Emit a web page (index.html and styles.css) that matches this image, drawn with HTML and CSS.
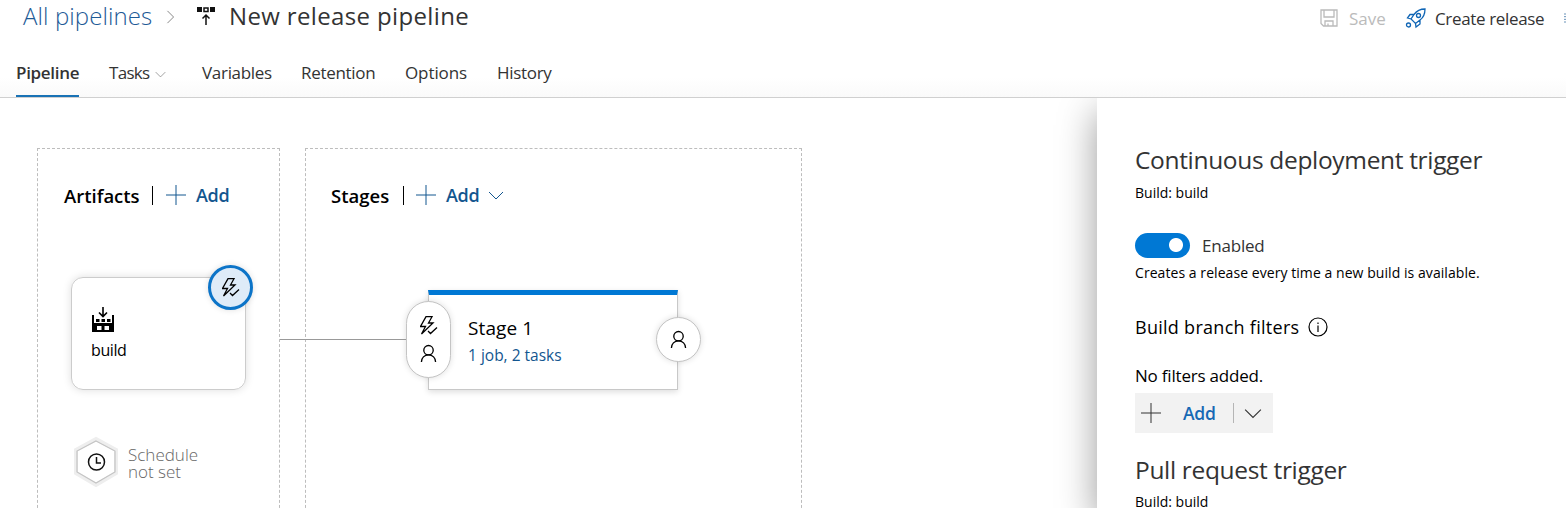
FILE: index.html
```html
<!DOCTYPE html>
<html lang="en">
<head>
<meta charset="utf-8">
<title>New release pipeline</title>
<link rel="stylesheet" href="styles.css">
</head>
<body>
<svg class="defs" width="0" height="0">
  <symbol id="bolt" viewBox="0 0 18 19"><path d="M6 .7h6L8.500 7H13L1.500 18l4-7.500h-5zM8 15l2.500 2.500 6.500-6"/></symbol>
  <symbol id="person" viewBox="0 0 18 20"><circle cx="9" cy="6.500" r="5"/><path d="M1.500 19c0-4.500 3.200-7.500 7.500-7.500s7.500 3 7.500 7.500"/></symbol>
  <symbol id="plus" viewBox="0 0 20 20"><path d="M10 0v20M0 10h20"/></symbol>
  <symbol id="chevron" viewBox="0 0 16 9"><path d="M1 1l7 7 7-7"/></symbol>
</svg>
<header class="header">
  <div class="title-row">
    <a class="crumb">All pipelines</a>
    <svg class="crumb-sep" viewBox="0 0 9 16"><path d="M1 1l7 7-7 7"/></svg>
    <svg class="release-icon" viewBox="0 0 18 19"><path class="fill" d="M0 0h5v5H0zM13 0h5v5h-5z"/><path d="M7 1h4v3.500H7zM9 18V8M5.500 11.500L9 8l3.500 3.500"/></svg>
    <h1 class="title">New release pipeline</h1>
    <div class="actions">
      <svg class="save-icon" viewBox="0 0 18 18"><path d="M1 1h16v16H3.500L1 14.500zM4 1v7h10V1M5 17v-5h8v5M8 17v-2.500"/></svg>
      <span class="save">Save</span>
      <svg class="rocket-icon" viewBox="0 0 21 20"><path d="M20 1c-5 0-8.500 2-11 5.500L6 11l4.500 4.500L15 12c3.500-2.500 5-6 5-11zM9 6.500L5 6.500 2.500 10 6 11M15 12v4l-4 3-.5-3.500"/><circle cx="13.500" cy="7.500" r="2"/><circle cx="3.500" cy="17" r="2"/></svg>
      <span class="create">Create release</span>
      <svg class="more-icon" viewBox="0 0 3 14"><path d="M0 1h3M0 5h3M0 9h3M0 13h3"/></svg>
    </div>
  </div>
  <nav class="tabs">
    <a class="tab active">Pipeline</a>
    <a class="tab tasks">Tasks<svg class="tab-chevron"><use href="#chevron"/></svg></a>
    <a class="tab variables">Variables</a>
    <a class="tab retention">Retention</a>
    <a class="tab options">Options</a>
    <a class="tab history">History</a>
  </nav>
</header>
<main class="main">
  <section class="canvas">
    <div class="column artifacts">
      <div class="column-head">
        <h2 class="artifacts-title">Artifacts</h2><i class="bar"></i>
        <svg class="plus"><use href="#plus"/></svg><span class="add">Add</span>
      </div>
      <div class="artifact">
        <svg class="build-icon" viewBox="0 0 22 25"><path class="fill" fill-rule="evenodd" d="M0 8h2v8h18V8h2v17H0zM5 19v4h4.500v-4zM12.500 19v4H17v-4zM4 12h3.500v3H4zM9.500 12h3.500v3H9.500zM15 12h3.500v3H15z"/><path d="M11 0v9M7 5.500l4 4 4-4"/></svg>
        <span class="build">build</span>
        <div class="trigger"><svg class="bolt"><use href="#bolt"/></svg></div>
      </div>
      <div class="schedule">
        <svg class="hexagon" viewBox="0 0 46 50"><path class="halo" d="M23 2l20 11v23L23 48 3 36V13z"/><path class="edge" d="M23 4l19 10v21L23 46 4 35V14z"/><circle cx="23.500" cy="25" r="8"/><path d="M23.500 20v6H28"/></svg>
        <p class="schedule-text">Schedule<br>not set</p>
      </div>
    </div>
    <div class="column stages">
      <div class="column-head">
        <h2 class="stages-title">Stages</h2><i class="bar"></i>
        <svg class="plus"><use href="#plus"/></svg><span class="add">Add</span>
        <svg class="add-chevron"><use href="#chevron"/></svg>
      </div>
      <div class="stage">
        <span class="stage-name">Stage 1</span>
        <span class="stage-jobs">1 job, 2 tasks</span>
        <div class="pre"><svg class="bolt"><use href="#bolt"/></svg><svg class="person"><use href="#person"/></svg></div>
        <div class="post"><svg class="person"><use href="#person"/></svg></div>
      </div>
    </div>
    <div class="connector"></div>
  </section>
  <aside class="panel">
    <h2 class="panel-title cd">Continuous deployment trigger</h2>
    <p class="small">Build: build</p>
    <div class="toggle-row"><i class="toggle"></i><span class="enabled">Enabled</span></div>
    <p class="small hint">Creates a release every time a new build is available.</p>
    <h3 class="filters">Build branch filters<svg class="info" viewBox="0 0 20 20"><circle cx="10" cy="10" r="9"/><path d="M10 8.500V15M10 5.500V7"/></svg></h3>
    <p class="none">No filters added.</p>
    <div class="split"><svg class="plus"><use href="#plus"/></svg><span class="split-add">Add</span><i class="split-bar"></i><svg class="split-chevron"><use href="#chevron"/></svg></div>
    <h2 class="panel-title pr">Pull request trigger</h2>
    <p class="small">Build: build</p>
  </aside>
</main>
</body>
</html>
```
FILE: styles.css
```css
* { box-sizing: border-box; }
body { margin: 0; width: 1566px; height: 508px; overflow: hidden; background: #fff; color: #333; font-family: "Open Sans", "Noto Sans", sans-serif; font-size: 17px; white-space: nowrap; display: flex; flex-direction: column; }
h1, h2, h3, p { margin: 0; font-weight: 400; }
svg { fill: none; stroke: currentColor; flex: none; overflow: visible; }
.fill { fill: currentColor; stroke: none; }
.defs { position: absolute; }
.header { height: 98px; border-bottom: 1px solid #d0d0d0; flex: none; background: linear-gradient(#fff 80%, #fafafa); }
.title-row { height: 48px; display: flex; padding-left: 23px; }
.crumb { width: 143px; font-size: 24px; line-height: 32px; font-weight: 300; letter-spacing: .1px; color: #1d5a96; }
.crumb-sep { width: 9px; height: 14px; margin: 10px 22px 0 0; stroke: #777; }
.release-icon { width: 18px; height: 19px; margin: 7px 14px 0 0; color: #111; stroke-width: 1.5; }
.title { font-size: 24px; line-height: 32px; letter-spacing: .36px; }
.actions { margin-left: auto; display: flex; align-items: flex-start; line-height: 37px; }
.save-icon { width: 18px; height: 18px; margin: 9px 11px 0 0; color: #bbb; stroke-width: 1.3; }
.save { width: 56px; color: #bbb; }
.rocket-icon { width: 21px; height: 20px; margin: 8px 9px 0 0; color: #0f65b5; stroke-width: 1.3; }
.create { width: 129px; letter-spacing: -.35px; }
.more-icon { width: 2px; height: 14px; margin-top: 11px; color: #1d5a96; }
.tabs { height: 49px; display: flex; padding-left: 16px; line-height: 49px; }
.tab { flex: none; letter-spacing: -.3px; }
.tab.active { width: 63px; margin-right: 30px; font-weight: 600; border-bottom: 2px solid #1972b5; }
.tab.tasks { width: 93px; letter-spacing: -.7px; }
.tab-chevron { width: 11px; height: 7px; margin-left: 6px; color: #777; vertical-align: 1px; }
.variables { width: 99px; }
.retention { width: 104px; }
.tab.options { width: 92px; letter-spacing: -.1px; }
.main { flex: 1; min-height: 0; display: flex; overflow: hidden; }
.canvas { position: relative; width: 1097px; padding: 50px 0 0 37px; display: flex; gap: 25px; }
.column { border: 1px dashed #bdbdbd; border-bottom: 0; height: 370px; }
.artifacts { width: 243px; }
.stages { width: 497px; }
.column-head { height: 92px; display: flex; align-items: center; padding: 0 0 0 25px; color: #13568f; }
.column-head h2 { font-size: 18.500px; font-weight: 600; color: #000; }
.artifacts-title { width: 89px; padding-left: 1px; }
.stages-title { width: 72px; }
.bar { width: 1px; height: 19px; background: #000; margin-right: 13px; }
.stages .bar { margin-right: 12px; }
.plus { width: 20px; height: 20px; }
.add { margin-left: 10px; font-size: 18px; font-weight: 600; width: 33px; letter-spacing: -.3px; }
.artifact { position: relative; margin: 36px 0 0 33px; width: 175px; height: 113px; border: 1px solid #ccc; border-radius: 12px; box-shadow: 0 0 8px #0002; padding: 29px 0 0 19px; display: flex; flex-direction: column; color: #000; }
.build-icon { width: 22px; height: 25px; stroke-width: 1.6; margin-left: 1px; }
.build { font-size: 16px; line-height: 22px; margin-top: 7px; letter-spacing: -.4px; }
.trigger { position: absolute; left: 136px; top: -13px; width: 45px; height: 45px; border: 3px solid #0c74c8; border-radius: 50%; background: #deebf8; display: grid; place-items: center; box-shadow: 0 0 6px #0002; }
.bolt { width: 18px; height: 19px; stroke-width: 1.3; color: #000; }
.person { width: 17px; height: 19px; stroke-width: 1.4; color: #000; }
.schedule { display: flex; margin: 47px 0 0 35px; }
.hexagon { width: 46px; height: 50px; color: #111; stroke-width: 1.5; }
.halo { stroke: #eee; stroke-width: 4; }
.edge { stroke: #c4c4c4; stroke-width: 1.2; }
.schedule-text { margin: 9px 0 0 9px; font-size: 17px; line-height: 17px; color: #666; font-weight: 300; }
.add-chevron { width: 16px; height: 9px; margin-left: 9px; }
.stage { position: relative; width: 250px; height: 100px; margin: 49px 0 0 122px; border: 1px solid #c8c8c8; border-top: 5px solid #0078d4; box-shadow: 0 2px 6px #0002; padding: 20px 0 0 39px; display: flex; flex-direction: column; }
.stage-name { font-size: 19px; line-height: 26px; letter-spacing: .1px; color: #000; }
.stage-jobs { font-size: 15.500px; line-height: 22px; margin-top: 3px; color: #13568f; }
.pre { position: absolute; left: -23px; top: 6px; width: 45px; height: 77px; border: 1px solid #c4c4c4; border-radius: 23px; background: #fff; display: flex; flex-direction: column; align-items: center; padding-top: 14px; gap: 9px; box-shadow: 0 0 6px #0002; }
.post { position: absolute; left: 227px; top: 22px; width: 45px; height: 45px; border: 1px solid #c4c4c4; border-radius: 50%; background: #fff; display: grid; place-items: center; box-shadow: 0 0 6px #0002; }
.connector { position: absolute; left: 280px; top: 241px; width: 126px; height: 1px; background: #999; }
.panel { width: 469px; flex: none; background: #fff; box-shadow: 0 14px 36px #0006; z-index: 1; padding: 44px 0 0 38px; color: #000; }
.panel-title { font-size: 24.500px; line-height: 35px; letter-spacing: -.33px; color: #333; }
.small { font-size: 14px; line-height: 20px; margin-top: 6px; }
.toggle-row { display: flex; align-items: center; margin-top: 30px; height: 25px; }
.toggle { width: 55px; height: 25px; border-radius: 13px; background: radial-gradient(circle at 41px 12px, #fff 6.500px, #0078d4 7.500px); margin-right: 12px; }
.enabled { color: #333; font-size: 17px; letter-spacing: -.2px; }
.hint { margin-top: 5px; letter-spacing: .06px; }
.filters { display: flex; align-items: center; margin-top: 31px; height: 26px; font-size: 18px; letter-spacing: .28px; }
.info { width: 20px; height: 20px; margin-left: 9px; stroke-width: 1.2; }
.none { margin-top: 23px; font-size: 17px; line-height: 26px; letter-spacing: -.2px; }
.split { margin-top: 4px; width: 138px; height: 40px; background: #f2f2f2; display: flex; align-items: center; padding-left: 6px; color: #333; }
.split-add { width: 34px; margin-left: 22px; color: #1769b5; font-weight: 600; font-size: 17.500px; letter-spacing: -.2px; }
.split-bar { width: 1px; height: 20px; background: #b5b5b5; margin: 0 10px 0 16px; }
.split-chevron { width: 18px; height: 11px; }
.pr { margin-top: 19px; }
.pr + .small { margin-top: 5px; }
```
